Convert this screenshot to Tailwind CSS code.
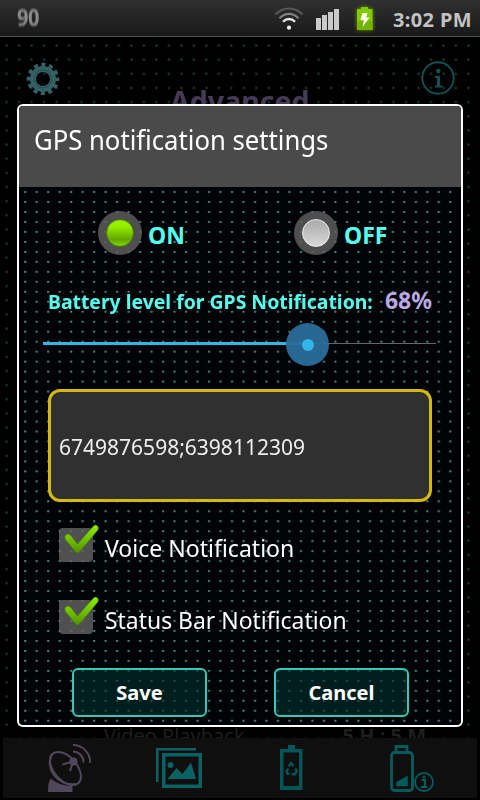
<!DOCTYPE html>
<html lang="en">

<head>
    <meta charset="UTF-8">
    <meta name="viewport" content="width=device-width, initial-scale=1.0">
    <title>GPS notification settings</title>
    <script src="https://cdn.jsdelivr.net/npm/@tailwindcss/browser@4"></script>
</head>

<body class="bg-black font-['Noto_Sans','Open_Sans',sans-serif]">
    <div class="relative w-[480px] h-[800px] overflow-hidden bg-black flex flex-col">

        <!-- Status bar -->
        <header class="h-[37px] shrink-0 flex items-center pl-[17px] pr-[8px] bg-linear-to-b from-[#303030] to-[#191919] border-b border-[#545454]">
            <span class="mb-px text-[20px] leading-none font-bold text-[#8d8d8d] tracking-[-0.5px] blur-[0.7px] scale-y-[1.15]">90</span>
            <svg class="ml-auto" width="30" height="24" viewBox="0 0 30 24" fill="none">
                <path d="M1.500 8.500C9 .5 21 .5 28.500 8.500" stroke="#585858" stroke-width="2.200" />
                <path d="M5.500 12.300C11 6.300 19 6.300 24.500 12.300" stroke="#808080" stroke-width="2.200" />
                <path d="M9 15.800C12.500 12 17.500 12 21 15.800" stroke="#e6e6e6" stroke-width="2.400" />
                <circle cx="15" cy="21.700" r="2.100" fill="#eee" />
            </svg>
            <svg class="ml-3 mt-[3px]" width="24" height="22" viewBox="0 0 24 22" fill="#c9c9c9">
                <rect x="0" y="9" width="5" height="12" />
                <rect x="6" y="6" width="5" height="15" />
                <rect x="12" y="3" width="5" height="18" />
                <rect x="18" y="0" width="5" height="21" />
            </svg>
            <svg class="ml-4 mt-[2px] drop-shadow-[0_0_2px_#6a9a00]" width="18" height="26" viewBox="0 0 18 26">
                <path d="M1 3h4V1h7v2h4.500v21H1z" fill="#83cb00" />
                <path d="M1 15h15.500v9H1z" fill="#76b300" />
                <path d="M6.500 7h5l-1.500 4.500h3.500L6.500 21l1.500-7H4.500z" fill="#fff" />
            </svg>
            <span class="ml-[19px] mt-[3px] w-[79px] text-[20px] leading-none font-bold text-[#c2c2c2] tracking-[0.35px] whitespace-nowrap">3:02 PM</span>
        </header>

        <!-- Dimmed screen behind the dialog -->
        <main class="relative flex-1 overflow-hidden">
            <svg class="absolute inset-0" width="480" height="763">
                <defs>
                    <pattern id="dimDots" x="0.460" y="1.400" width="12.480" height="14.150" patternUnits="userSpaceOnUse">
                        <rect x="5.200" y="6.100" width="2" height="2" fill="#24463f" />
                    </pattern>
                </defs>
                <rect width="475" height="703" fill="url(#dimDots)" />
            </svg>
            <div class="relative flex justify-between pl-[26px] pr-[24px] pt-[24px]">
                <svg width="34" height="34" viewBox="-17 -18 34 34" fill="none" stroke="#326266">
                    <circle r="10" stroke-width="6" />
                    <circle r="14.300" stroke-width="4" stroke-dasharray="4 3.488" stroke-dashoffset="2" />
                    <circle r="9" stroke="#274a50" stroke-width="1" />
                </svg>
                <svg width="36" height="36" viewBox="0 0 36 36" fill="none">
                    <circle cx="18" cy="17" r="15.700" stroke="#0d5353" stroke-width="1.900" />
                    <path d="M15 15h5v9.500h2.200v2H15v-2h2V17h-2z" fill="#0d5353" />
                    <circle cx="18.300" cy="10" r="2.300" fill="#0d5353" />
                </svg>
            </div>
            <div class="absolute top-[44px] left-[170px] text-[29px] leading-[40px] font-bold text-[#453b57] origin-left scale-x-[0.985]">Advanced</div>
            <div class="absolute top-[686px] left-[104px] right-[54px] flex justify-between text-[20px] leading-[26px] text-[#1e1e1e]">
                <span>Video Playback</span><span class="font-bold">5 H : 5 M</span>
            </div>
        </main>

        <!-- Bottom tabs -->
        <nav class="absolute left-[3px] top-[738px] w-[474px] h-[60px] bg-[#0f0f0f] flex">
            <svg width="474" height="60" viewBox="3 738 474 60" fill="none">
                <g stroke="#51475b" stroke-width="2">
                    <ellipse cx="65.500" cy="768.500" rx="11.500" ry="19.500" transform="rotate(-41 65.500 768.500)" />
                    <path d="M52 754c-8 14 6 33 24 30" />
                    <path d="M62.500 764.500L73 761.500L70 771" />
                    <circle cx="73.500" cy="761.500" r="3" fill="#51475b" />
                    <path d="M73 751.500a10.500 10.500 0 0 1 10.500 11M73 745a17 17 0 0 1 17 18" />
                    <path d="M51 780c5 4 12 7 20.500 7v4H49c0-5 0-8 2-11z" fill="#51475b" />
                </g>
                <g fill="#0b6264">
                    <path d="M156 748h40v2.500h-37.500V782H156z" />
                    <path d="M162 753h40v35h-40zM165.500 756.500v28h33v-28z" fill-rule="evenodd" />
                    <circle cx="170.500" cy="765" r="3" />
                    <path d="M167.500 779l9-11 6 6 8.500-11.500 5 16.500z" />
                </g>
                <g fill="#045558">
                    <path d="M288 745h7v4h7.500v41H280v-41h8zM283.500 752.500v33.500H299v-33.500z" fill-rule="evenodd" />
                    <g stroke="#045558" stroke-width="2.400" fill="none">
                        <path d="M288.800 766.500l2.300-3.500 2.500 3M295.300 768.500l1.500 3-2 2.700h-3.300M289.500 773.800h-2l-1-2.300 1.800-3" />
                    </g>
                </g>
                <g stroke="#045b5e" stroke-width="2.800">
                    <path d="M396 751v-4.500h11v4.500" />
                    <rect x="391.500" y="752.500" width="21" height="38" rx="3" />
                    <path d="M397 785.500v-3l10-5.500v8.500z" fill="#045b5e" stroke-width="1.500" />
                    <circle cx="424" cy="782" r="9" stroke-width="1.800" />
                    <path d="M421.500 780h3.500v7M421 787h6.500" stroke-width="2" />
                    <circle cx="424" cy="777" r="1.500" fill="#045b5e" stroke="none" />
                </g>
            </svg>
        </nav>

        <!-- Dialog -->
        <section class="absolute left-[17px] top-[104px] w-[446px] h-[623px] border-2 border-white rounded-[6px] overflow-hidden bg-[#010306] flex flex-col">
            <svg class="absolute inset-0" width="442" height="619">
                <defs>
                    <pattern id="dots" x="0.250" y="1.300" width="11.490" height="9.975" patternUnits="userSpaceOnUse">
                        <rect x="4.700" y="4" width="3" height="2" fill="#04201e" />
                        <rect x="5" y="4" width="1.800" height="1.800" fill="#5d8a83" />
                    </pattern>
                </defs>
                <rect width="436" height="619" fill="url(#dots)" />
            </svg>
            <h1 class="relative h-[81px] shrink-0 bg-[#4a4a4a] pl-[15px] pt-[14px] text-[27px] leading-[40px] text-white whitespace-nowrap"><span class="inline-block origin-left scale-x-[0.951]">GPS notification settings</span></h1>

            <div class="relative flex pl-[79px] pt-[24px] text-[23px] font-bold text-[#55fff0]">
                <label class="w-[196px] flex items-center gap-[6px]">
                    <span class="size-[44px] rounded-full bg-[#626262]/80 flex items-center justify-center">
                        <span class="size-[28px] rounded-full bg-linear-to-b from-[#94f000] from-25% via-[#65a400] via-75% to-[#80d800] border border-[#4b7d00]"></span>
                    </span>
                    <span class="mt-1">ON</span>
                </label>
                <label class="flex items-center gap-[6px]">
                    <span class="size-[44px] rounded-full bg-[#626262]/80 flex items-center justify-center">
                        <span class="size-[28px] rounded-full bg-linear-to-b from-[#aaa] to-[#d8d8d8] border border-[#eee]"></span>
                    </span>
                    <span class="mt-1">OFF</span>
                </label>
            </div>

            <div class="relative mt-[28px] h-[36px] pl-[29px] pr-[29px] flex items-baseline justify-between font-bold whitespace-nowrap leading-[34px]">
                <span class="text-[20px] text-[#55fff0] origin-left scale-x-[0.97]">Battery level for GPS Notification:</span>
                <span class="text-[23px] text-[#bba8e4]">68%</span>
            </div>

            <div class="relative mt-[3px] ml-[24px] w-[393px] h-[43px] flex items-center">
                <div class="w-[264px] h-[3px] bg-[#31b6e9]"></div>
                <div class="flex-1 h-px bg-[#666]"></div>
                <div class="absolute left-[243px] top-[1px] size-[43px] rounded-full bg-[#2a6d9a]/95 flex items-center justify-center">
                    <span class="size-[12px] rounded-full bg-[#31b6e9]"></span>
                </div>
            </div>

            <div class="relative mt-[24px] ml-[29px] w-[384px] h-[113px] shrink-0 border-3 border-[#d5b90d] rounded-[12px] bg-[#303030] flex items-center pl-[8px] pt-px text-[22px] text-[#eee]"><span class="origin-left scale-x-[0.955]">6749876598;6398112309</span></div>

            <div class="relative mt-[23px] pl-[40px] flex flex-col gap-[36px] text-[24px] leading-[36px] text-white whitespace-nowrap">
                <label class="h-[36px] flex items-start gap-[3px]">
                    <svg width="43" height="36" viewBox="0 0 43 36" class="overflow-visible">
                        <defs>
                            <linearGradient id="tick" x1="0" y1="0" x2="0" y2="1">
                                <stop offset="0" stop-color="#8cf000" />
                                <stop offset="1" stop-color="#539000" />
                            </linearGradient>
                        </defs>
                        <rect y="3" width="34" height="34" rx="4" fill="#646464" fill-opacity=".8" />
                        <path d="M6.300 14.500q-1.500-3.500 1-5t4.500 1l6.700 8.500L34.500 1q2-1.800 4 0t0 4.500L20.500 27q-2 2.300-4 0z" fill="url(#tick)" stroke="#42730b" stroke-width=".5" />
                    </svg>
                    <span class="mt-[5px] origin-left scale-x-[0.96]">Voice Notification</span>
                </label>
                <label class="h-[36px] flex items-start gap-[3px]">
                    <svg width="43" height="36" viewBox="0 0 43 36" class="overflow-visible">
                        <rect y="3" width="34" height="34" rx="4" fill="#646464" fill-opacity=".8" />
                        <path d="M6.300 14.500q-1.500-3.500 1-5t4.500 1l6.700 8.500L34.500 1q2-1.800 4 0t0 4.500L20.500 27q-2 2.300-4 0z" fill="url(#tick)" stroke="#42730b" stroke-width=".5" />
                    </svg>
                    <span class="mt-[5px] origin-left scale-x-[0.955]">Status Bar Notification</span>
                </label>
            </div>

            <div class="relative mt-[35px] pl-[53px] flex gap-[67px] text-[20px] font-bold text-white">
                <button class="w-[135px] h-[49px] rounded-[6px] border-2 border-[#30c9ba] bg-[#00302f]/60">Save</button>
                <button class="w-[135px] h-[49px] rounded-[6px] border-2 border-[#30c9ba] bg-[#00302f]/60">Cancel</button>
            </div>
        </section>
    </div>
</body>

</html>
